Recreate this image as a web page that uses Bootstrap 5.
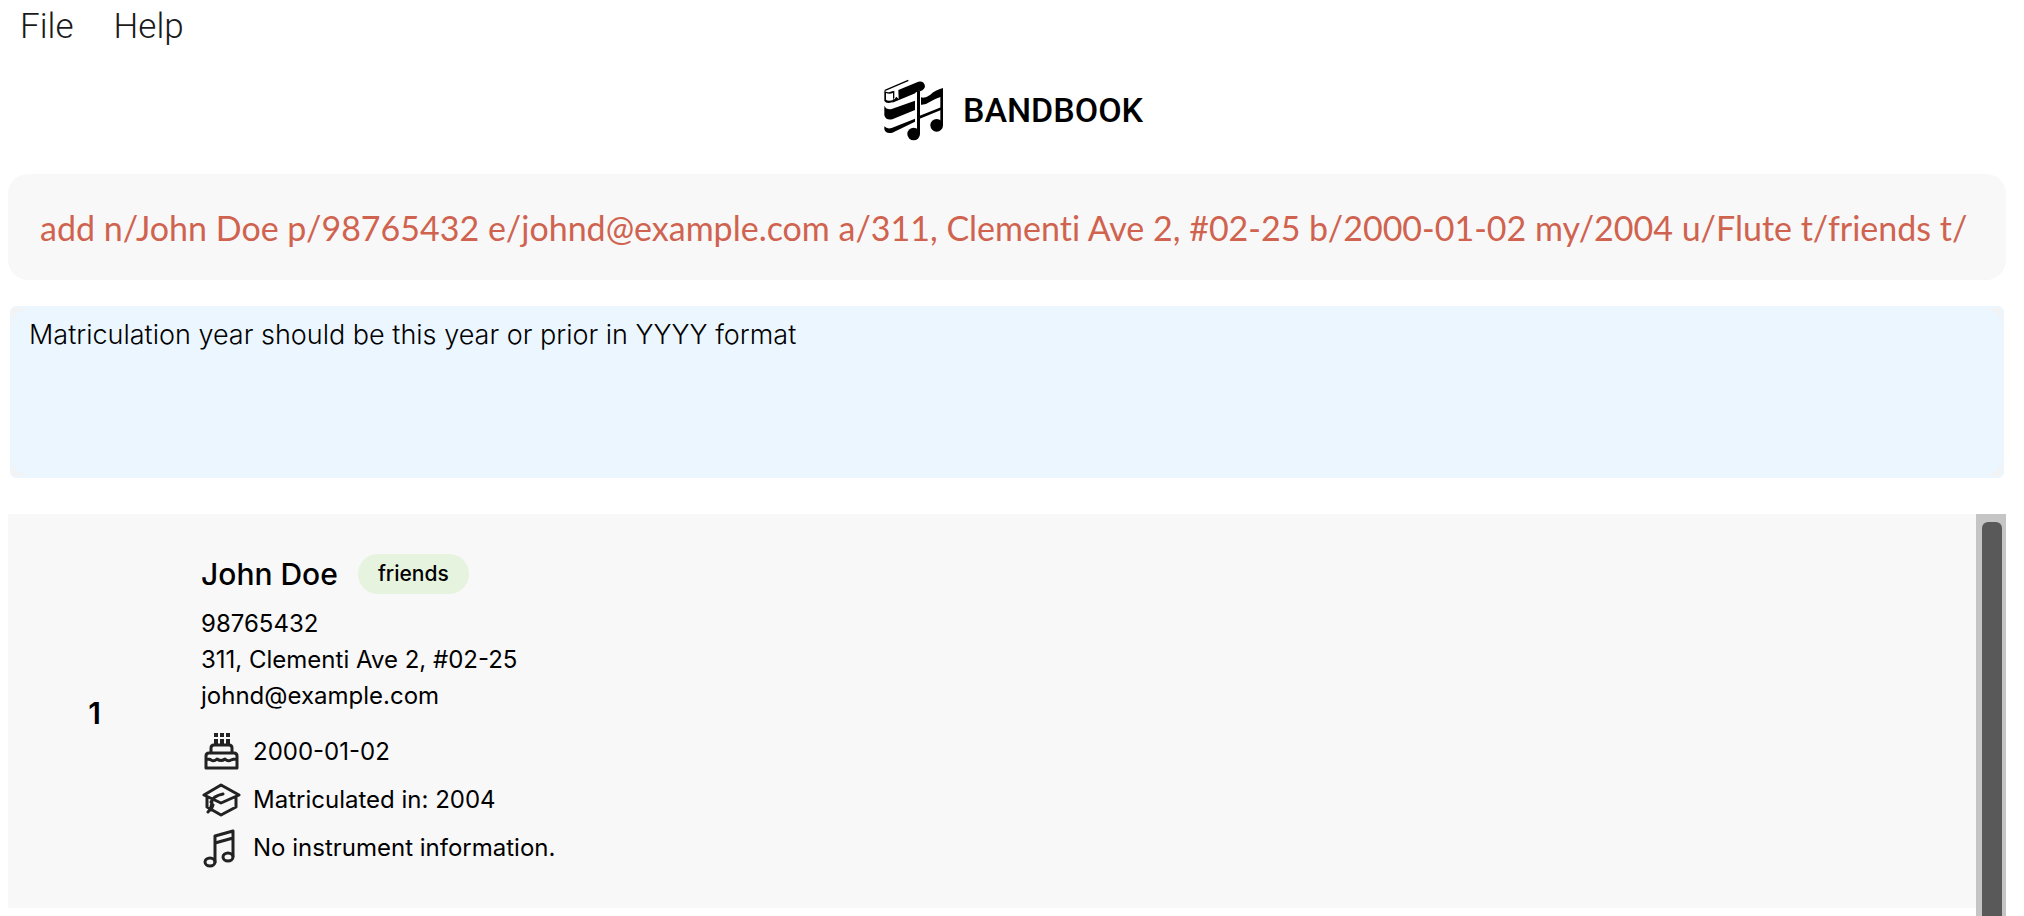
<!DOCTYPE html>
<html lang="en">
<head>
<meta charset="utf-8">
<meta name="viewport" content="width=device-width, initial-scale=1">
<title>BandBook</title>
<link href="https://cdn.jsdelivr.net/npm/bootstrap@5.3.0/dist/css/bootstrap.min.css" rel="stylesheet">
<style>
  body { font-family: Inter, "Liberation Sans", sans-serif; color: #000; background: #fff; }
  .menu-item { font: 300 35px/54px Roboto, sans-serif; color: #1a1a1a; }
  .brand { font: 500 34px/64px Roboto, sans-serif; color: #000; }
  .banner { padding: 24px 0 32px; }
  .content { padding: 0 18px 0 8px; min-height: 0; }
  .command-input, .command-input:focus {
    height: 106px; padding: 0 32px; border: 0; border-radius: 20px;
    background: #f8f8f8; color: #d0634f; box-shadow: none;
    font: 400 34px/48px Lato, sans-serif; font-variant-ligatures: none;
  }
  .result { margin: 26px 2px 0; padding: 2px; border-radius: 6px; background: #ebf6ff; }
  .result-inner { border-radius: 4px; background: #f3f3f3; }
  .result textarea {
    height: 168px; padding: 8px 17px; border: 0; border-radius: 18px; resize: none;
    background: #ebf6ff; color: #000; font: 300 27px/38px Inter, sans-serif; outline: 0;
  }
  .people { margin-top: 36px; min-height: 0; }
  .person { background: #f8f8f8; padding: 40px 0 36px; }
  .person-index { width: 193px; padding-right: 20px; font-size: 30px; font-weight: 600; line-height: 36px; }
  .person-name { font-size: 30px; font-weight: 500; line-height: 40px; }
  .tag { margin-left: 20px; padding: 0 20px; border-radius: 20px; background: #e6f3df; font-size: 21px; font-weight: 500; line-height: 40px; }
  .contact { margin: 12px 0 14px; font-size: 24px; line-height: 36px; }
  .facts { font-size: 24px; line-height: 48px; }
  .facts svg { width: 40px; height: 40px; margin-right: 12px; fill: none; stroke: #222; stroke-width: 3; stroke-linejoin: round; stroke-linecap: round; }
  .track { width: 30px; padding: 8px 4px 0 6px; background: #c5c5c5; }
  .thumb { border-radius: 6px 6px 0 0; background: #595959; }
</style>
</head>
<body>
<div class="d-flex flex-column vh-100 overflow-hidden">
  <nav class="d-flex px-1">
    <button type="button" class="menu-item btn border-0 rounded-0 py-0 px-3">File</button>
    <button type="button" class="menu-item btn border-0 rounded-0 py-0 ps-4 pe-3">Help</button>
  </nav>

  <header class="banner d-flex justify-content-center align-items-center">
    <svg width="66" height="64" viewBox="0 6 198 192" aria-hidden="true">
      <path d="M12 43 82 13" fill="none" stroke="#000" stroke-width="4"/>
      <path d="M10 42q3 8 14 7l12-4v6q-12 5-21 0v20q6 6 22 1l-2 6q-18 8-25-3z"/>
      <path d="M52 42 112 17q18-3 20 14-1 10-13 14L34 80l2-10 4 0 6-8 7 7z"/>
      <path d="M36 46l4-2v22l-4 4z"/>
      <path d="M10 89q6 13 22 10l70-25v28L34 130q-20 4-24-12z"/>
      <path d="M10 151q8 9 22 5l70-28v9L34 170q-20 5-24-10z"/>
      <path d="M103 50l14-8v132h-14z" fill="#fff"/>
      <path d="M108 46l9-4v132h-9z"/>
      <circle cx="98" cy="174" r="19"/>
      <path d="M120 64q12 4 28-8 14-14 38-20v112h-8V63q-16 5-28 13-15 11-30 10z"/>
      <path d="M116 119l64-25v8l-64 26z"/>
      <circle cx="167" cy="148" r="19"/>
    </svg>
    <h1 class="brand mb-0 ms-3 text-uppercase">Bandbook</h1>
  </header>

  <main class="content d-flex flex-column flex-grow-1">
    <input class="command-input form-control flex-shrink-0" type="text" aria-label="Command" spellcheck="false"
      value="add n/John Doe p/98765432 e/johnd@example.com a/311, Clementi Ave 2, #02-25 b/2000-01-02 my/2004 u/Flute t/friends t/">

    <div class="result flex-shrink-0">
      <div class="result-inner">
        <textarea class="d-block w-100" readonly aria-label="Result">Matriculation year should be this year or prior in YYYY format</textarea>
      </div>
    </div>

    <section class="people d-flex flex-grow-1" aria-label="Members">
      <div class="flex-grow-1">
        <article class="person d-flex align-items-center">
          <div class="person-index text-center">1</div>
          <div>
            <div class="d-flex align-items-center">
              <h2 class="person-name mb-0">John Doe</h2>
              <span class="tag">friends</span>
            </div>
            <div class="contact">
              <div>98765432</div>
              <div>311, Clementi Ave 2, #02-25</div>
              <div>johnd@example.com</div>
            </div>
            <div class="facts">
              <div class="d-flex align-items-center">
                <svg viewBox="0 0 40 40" aria-hidden="true">
                  <path d="M5 36V24q0-3 3-3h25q3 0 3 3v12zM10 21v-5q0-3 3-3h15q3 0 3 3v5M5 27q4 0 5 1 3 2 6-1 4 3 8 0 3 3 6 1 2-1 6-1"/>
                  <path d="M13 1h4v4h-4zM19 1h4v4h-4zM25 1h4v4h-4zM13 7h4v5h-4zM19 7h4v5h-4zM25 7h4v5h-4z" fill="#222" stroke="none"/>
                </svg>2000-01-02
              </div>
              <div class="d-flex align-items-center">
                <svg viewBox="0 0 40 40" aria-hidden="true">
                  <path d="M3 15 20 5l18 10-18 8zM6 17v10l14 8 15-8V17M22 14q-10 2-12 8M11 20q0 8-4 12M12 25l-2 5"/>
                </svg>Matriculated in: 2004
              </div>
              <div class="d-flex align-items-center">
                <svg viewBox="0 0 40 40" aria-hidden="true">
                  <path d="M14 34V8l18-5v25M14 15l18-5"/>
                  <ellipse cx="9" cy="34" rx="5" ry="4"/><ellipse cx="27" cy="29" rx="5" ry="4"/>
                </svg>No instrument information.
              </div>
            </div>
          </div>
        </article>
      </div>
      <div class="track d-flex flex-shrink-0" aria-hidden="true"><div class="thumb flex-grow-1"></div></div>
    </section>
  </main>
</div>
<script src="https://cdn.jsdelivr.net/npm/bootstrap@5.3.0/dist/js/bootstrap.bundle.min.js"></script>
</body>
</html>
